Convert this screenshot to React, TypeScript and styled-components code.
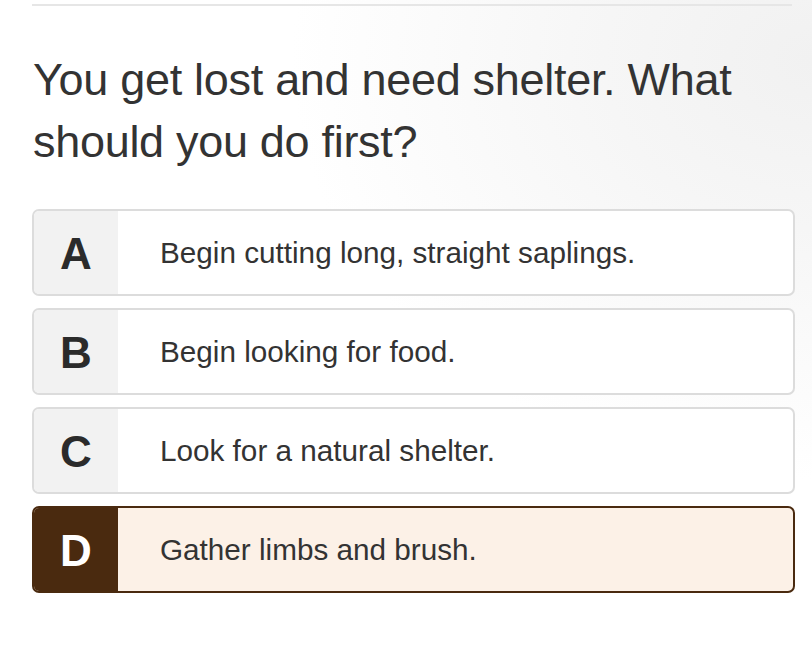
import React from "react";
import styled, { createGlobalStyle } from "styled-components";

const Global = createGlobalStyle`
  html, body { margin: 0; padding: 0; }
  body {
    font-family: "Liberation Sans", Arial, sans-serif;
    background: radial-gradient(ellipse 520px 420px at 812px 60px, #f1f1f1 0%, #f6f6f6 40%, #ffffff 100%);
    min-height: 654px;
    color: #333;
  }
`;

const Page = styled.div`
  padding: 4px 17px 0 32px;
  width: 812px;
  height: 654px;
  box-sizing: border-box;
`;

const Rule = styled.hr`
  margin: 0 3px 0 0;
  border: none;
  height: 2px;
  background: #e6e6e6;
`;

const Question = styled.h1`
  margin: 43px 0 0 1px;
  font-size: 45px;
  font-weight: 400;
  line-height: 62px;
  color: #333;
  letter-spacing: -0.3px;
`;

const Options = styled.div`
  margin-top: 36px;
  display: flex;
  flex-direction: column;
  gap: 12px;
`;

const Option = styled.div<{ $selected?: boolean }>`
  display: flex;
  height: 87px;
  box-sizing: border-box;
  border: 2px solid ${(p) => (p.$selected ? "#4a2a0f" : "#dcdcdc")};
  border-radius: 7px;
  overflow: hidden;
  background: ${(p) => (p.$selected ? "#fcf1e7" : "#ffffff")};
`;

const Letter = styled.div<{ $selected?: boolean }>`
  width: 84px;
  flex: none;
  display: flex;
  align-items: center;
  justify-content: center;
  padding-top: 2px;
  background: ${(p) => (p.$selected ? "#4a2a0f" : "#f2f2f2")};
  color: ${(p) => (p.$selected ? "#ffffff" : "#2b2b2b")};
  font-weight: 700;
  font-size: 44px;
`;

const Text = styled.div`
  display: flex;
  align-items: center;
  padding-left: 42px;
  font-size: 29.7px;
  color: #333;
`;

const options = [
  { l: "A", t: "Begin cutting long, straight saplings." },
  { l: "B", t: "Begin looking for food." },
  { l: "C", t: "Look for a natural shelter." },
  { l: "D", t: "Gather limbs and brush.", s: true },
];

export default function App() {
  return (
    <>
      <Global />
      <Page>
        <Rule />
        <Question>
          You get lost and need shelter. What
          <br />
          should you do first?
        </Question>
        <Options>
          {options.map((o) => (
            <Option key={o.l} $selected={o.s}>
              <Letter $selected={o.s}>{o.l}</Letter>
              <Text>{o.t}</Text>
            </Option>
          ))}
        </Options>
      </Page>
    </>
  );
}
